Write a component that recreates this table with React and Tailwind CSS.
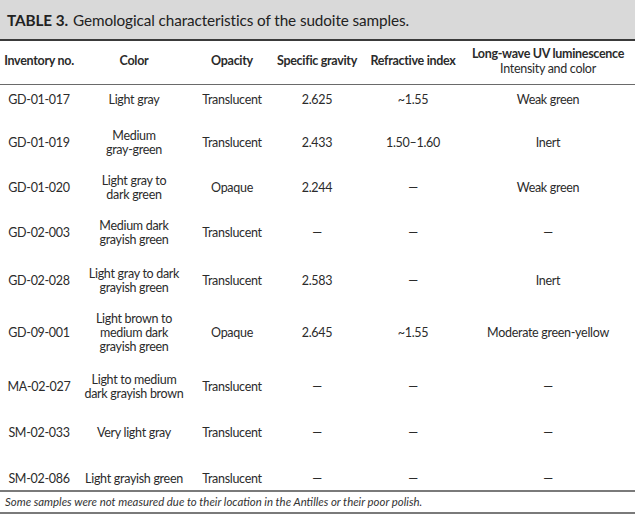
import React from "react";

const rows = [
  { id: "GD-01-017", color: ["Light gray"], op: "Translucent", sg: "2.625", ri: "~1.55", uv: "Weak green", h: "h-[36px] pb-[6px]" },
  { id: "GD-01-019", color: ["Medium", "gray-green"], op: "Translucent", sg: "2.433", ri: "1.50–1.60", uv: "Inert", h: "h-[44px]" },
  { id: "GD-01-020", color: ["Light gray to", "dark green"], op: "Opaque", sg: "2.244", ri: "—", uv: "Weak green", h: "h-[45px]" },
  { id: "GD-02-003", color: ["Medium dark", "grayish green"], op: "Translucent", sg: "—", ri: "—", uv: "—", h: "h-[46px]" },
  { id: "GD-02-028", color: ["Light gray to dark", "grayish green"], op: "Translucent", sg: "2.583", ri: "—", uv: "Inert", h: "h-[50px]" },
  { id: "GD-09-001", color: ["Light brown to", "medium dark", "grayish green"], op: "Opaque", sg: "2.645", ri: "~1.55", uv: "Moderate green-yellow", h: "h-[54px]" },
  { id: "MA-02-027", color: ["Light to medium", "dark grayish brown"], op: "Translucent", sg: "—", ri: "—", uv: "—", h: "h-[51px] pt-[3px]" },
  { id: "SM-02-033", color: ["Very light gray"], op: "Translucent", sg: "—", ri: "—", uv: "—", h: "h-[44px]" },
  { id: "SM-02-086", color: ["Light grayish green"], op: "Translucent", sg: "—", ri: "—", uv: "—", h: "h-[35px] pt-[12px]" },
];

const grid = "grid grid-cols-[78px_112px_84px_86px_106px_164px] items-center text-center";

export default function App() {
  return (
    <div className="w-[636px] h-[519px] bg-white text-[#2b2b2b] overflow-hidden" style={{ fontFamily: "Lato, 'Open Sans', sans-serif" }}>
      <div className="w-[635px]">
        <div className="h-[39px] bg-[#d9d9d9] flex items-center pl-[7px] pt-[2px] text-[15.3px] tracking-[-0.1px] text-[#222]">
          <span className="font-bold">TABLE 3.</span>
          <span className="ml-[5px]">Gemological characteristics of the sudoite samples.</span>
        </div>
        <div className="h-[2px] bg-[#3a3a3a]" />
        <div className={`${grid} h-[43px] pb-[4px] text-[12.5px] tracking-[-0.3px] leading-[15px]`}>
          <div className="font-bold whitespace-nowrap">Inventory no.</div>
          <div className="font-bold">Color</div>
          <div className="font-bold">Opacity</div>
          <div className="font-bold whitespace-nowrap">Specific gravity</div>
          <div className="font-bold whitespace-nowrap">Refractive index</div>
          <div className="whitespace-nowrap">
            <div className="font-bold">Long-wave UV luminescence</div>
            <div>Intensity and color</div>
          </div>
        </div>
        <div className="h-[1px] bg-[#6a6a6a]" />
        {rows.map((r) => (
          <div key={r.id} className={`${grid} ${r.h} text-[12.5px] tracking-[-0.3px] leading-[14px]`}>
            <div className="whitespace-nowrap">{r.id}</div>
            <div className="whitespace-nowrap">
              {r.color.map((c) => (
                <div key={c}>{c}</div>
              ))}
            </div>
            <div>{r.op}</div>
            <div>{r.sg}</div>
            <div className="whitespace-nowrap">{r.ri}</div>
            <div className="whitespace-nowrap">{r.uv}</div>
          </div>
        ))}
        <div className="h-[2px] bg-[#7a7a7a]" />
        <div className="h-[20px] flex items-center pl-[5px] italic text-[11.4px] text-[#333]">
          Some samples were not measured due to their location in the Antilles or their poor polish.
        </div>
        <div className="h-[2px] bg-[#7a7a7a]" />
      </div>
    </div>
  );
}
